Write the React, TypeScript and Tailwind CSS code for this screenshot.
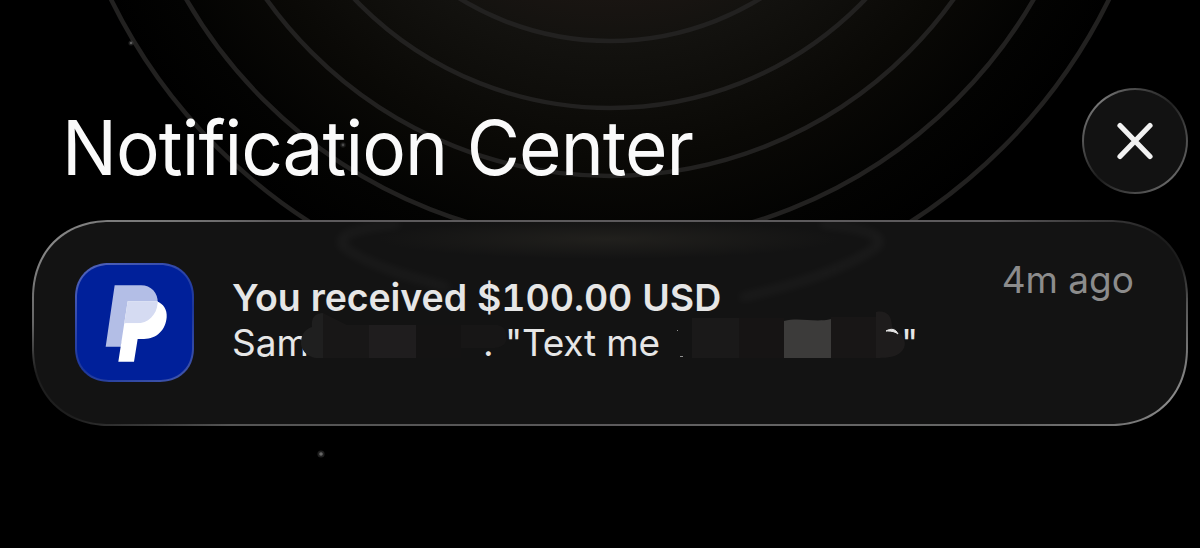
import type { ReactNode } from "react";

const RING_RADII = [287, 354, 422, 489.5, 556];

const STARS = [
  { x: 131, y: 43, r: 1.3, fill: "#5c5c5c" },
  { x: 343, y: 145, r: 1.4, fill: "#4a4a4a" },
  { x: 321, y: 454, r: 1.8, fill: "#666666" },
];

function Wallpaper() {
  return (
    <svg
      className="absolute inset-0 h-full w-full"
      viewBox="0 0 1200 548"
      fill="none"
      aria-hidden="true"
    >
      <defs>
        <radialGradient id="glow" gradientUnits="userSpaceOnUse" cx="610" cy="-246" r="560">
          <stop offset="0.4" stopColor="#1c1613" />
          <stop offset="0.52" stopColor="#13120f" />
          <stop offset="0.72" stopColor="#0a0906" />
          <stop offset="0.88" stopColor="#030302" />
          <stop offset="1" stopColor="#000000" />
        </radialGradient>
      </defs>
      <rect width="1200" height="548" fill="url(#glow)" />
      {RING_RADII.map((r) => (
        <circle key={r} cx="610" cy="-246" r={r} stroke="#222120" strokeWidth="4.5" />
      ))}
      {STARS.map((star) => (
        <g key={star.x}>
          <circle cx={star.x} cy={star.y} r={star.r * 2} fill={star.fill} opacity="0.3" />
          <circle cx={star.x} cy={star.y} r={star.r} fill={star.fill} />
        </g>
      ))}
    </svg>
  );
}

function CloseButton() {
  return (
    <button
      type="button"
      aria-label="Close"
      className="flex h-[106px] w-[106px] items-center justify-center rounded-full border-2 border-transparent [background:linear-gradient(#121212,#121212)_padding-box,conic-gradient(#4a4a4a,#222_45deg,#505050_90deg,#666_140deg,#4a4a4a_180deg,#1c1c1c_225deg,#555_270deg,#777_320deg,#4a4a4a)_border-box]"
    >
      <svg width="38" height="38" viewBox="0 0 38 38" fill="none">
        <path
          d="M4 3.5 34 34.5M34 3.5 4 34.5"
          stroke="#f2f2f2"
          strokeWidth="5.2"
          strokeLinecap="round"
        />
      </svg>
    </button>
  );
}

function PayPalIcon() {
  return (
    <div className="h-[119px] w-[119px] shrink-0 rounded-[34px] border-2 border-transparent [background:linear-gradient(#00209a,#00209a)_padding-box,linear-gradient(150deg,#5567bd,#2a42a6_40%,#1d3799_60%,#4458ad)_border-box] [corner-shape:superellipse(1.1)]">
      <svg className="h-full w-full" viewBox="51 44 345 345" fill="none">
        <defs>
          <clipPath id="backP">
            <path d="M164 105H243C273 105 295 128 293 158C290 195 264 219 230 219H197L183 289H137Z" />
          </clipPath>
        </defs>
        <path
          d="M164 105H243C273 105 295 128 293 158C290 195 264 219 230 219H197L183 289H137Z"
          fill="#b3bee6"
        />
        <path
          d="M203 153H290C310 160 322 178 320 201C317 239 290 266 252 266H233L222 334H175Z"
          fill="#ffffff"
        />
        <g clipPath="url(#backP)">
          <path d="M203 153H330V219H193Z" fill="#d5dbf2" />
        </g>
      </svg>
    </div>
  );
}

function CardSheen() {
  return (
    <svg
      className="absolute left-0 top-0 h-[202px] w-[1152px]"
      viewBox="34 222 1152 202"
      fill="none"
      aria-hidden="true"
    >
      <defs>
        <filter
          id="soft"
          x="-20%"
          y="-50%"
          width="140%"
          height="200%"
          colorInterpolationFilters="sRGB"
        >
          <feGaussianBlur stdDeviation="4" />
        </filter>
        <radialGradient id="sheen">
          <stop offset="0" stopColor="#21201d" />
          <stop offset="1" stopColor="#21201d" stopOpacity="0" />
        </radialGradient>
      </defs>
      <path
        d="M400 224C350 228 332 238 345 248C370 266 410 277 450 288"
        stroke="#ffffff"
        strokeOpacity="0.045"
        strokeWidth="7"
        filter="url(#soft)"
      />
      <path
        d="M820 224C870 228 890 238 875 248C840 272 790 286 740 298"
        stroke="#ffffff"
        strokeOpacity="0.045"
        strokeWidth="7"
        filter="url(#soft)"
      />
      <ellipse cx="608" cy="239" rx="230" ry="20" fill="url(#sheen)" />
    </svg>
  );
}

function Redactions() {
  return (
    <svg
      className="absolute left-0 top-0 h-[202px] w-[1152px]"
      viewBox="34 222 1152 202"
      aria-hidden="true"
    >
      <path d="M323 313V358H318C308 358 300 350 301 341C302 333 306 329 312 327C311 318 315 313 323 313Z" fill="#1f1f1f" />
      <path d="M323 313 347 325H369V358H323Z" fill="#181717" />
      <path d="M369 325H416V358H369Z" fill="#1f1d1e" />
      <path d="M416 325H461V358H416Z" fill="#141313" />
      <path d="M461 325H498C505 326 508 334 506 341C504 347 498 348 492 348H461Z" fill="#171616" />
      <path d="M692 318H739V358H692Z" fill="#1a1919" />
      <path d="M739 318H784V358H739Z" fill="#161414" />
      <path d="M784 321C800 317 815 323 831 319V358H784Z" fill="#3c3b3a" />
      <path d="M831 317H877V358H831Z" fill="#181616" />
      <path
        d="M876 312C886 310 892 315 892 327C902 332 907 341 904 348C900 355 894 358 876 358Z"
        fill="#1e1c1c"
      />
      <path d="M886 331C891 328 896 329 898 334C894 331 890 331 886 331Z" stroke="#e4e4e4" fill="#e4e4e4" />
      <path d="M677 330h1v1h-1zM680 356h3v1h-3z" fill="#909090" />
    </svg>
  );
}

function NotificationCard({
  icon,
  title,
  time,
  children,
}: {
  icon: ReactNode;
  title: string;
  time: string;
  children: ReactNode;
}) {
  return (
    <article className="relative ml-8 mt-[26px] h-[206px] w-[1156px] rounded-[78px] border-2 border-transparent [background:linear-gradient(#131313,#131313)_padding-box,conic-gradient(#5c5a5c,#5c5a5c_75deg,#1c1c1c_81deg,#1c1c1c_84deg,#555_88deg,#777_93deg,#8c8c8c_98deg,#777_101deg,#666_104deg,#5c5a5c_180deg,#555_255deg,#1e1e1e_260deg,#1e1e1e_265deg,#666_270deg,#888_278deg,#777_283deg,#5c5a5c_287deg)_border-box] [corner-shape:superellipse(1.12)]">
      <CardSheen />
      <div className="relative flex items-start pl-[41px] pr-[52px] pt-[41px]">
        {icon}
        <div className="ml-[38px] flex-1 whitespace-nowrap pt-[12px] text-[#e6e6e6]">
          <div className="text-[37.5px] font-semibold leading-[46px] tracking-[-0.07px] tabular-nums">
            {title}
          </div>
          {children}
        </div>
        <time className="whitespace-nowrap text-[37px] leading-[34px] text-[#8c8c8c]">{time}</time>
      </div>
      <Redactions />
    </article>
  );
}

export default function App() {
  return (
    <main className="relative h-[548px] w-[1200px] overflow-hidden bg-black font-['Inter',sans-serif]">
      <Wallpaper />
      <header className="relative flex items-start justify-between pl-[62px] pr-3 pt-[88px]">
        <h1 className="origin-left scale-x-[0.96] whitespace-nowrap pt-[13px] text-[76px] font-normal leading-[92px] tracking-[-1px] text-[#fafafa]">
          Notification Center
        </h1>
        <CloseButton />
      </header>
      <NotificationCard icon={<PayPalIcon />} title="You received $100.00 USD" time="4m ago">
        <div className="flex text-[37px] leading-[44px]">
          <span className="w-[251px]">Sam</span>
          <span className="w-[22px]">.</span>
          <span className="w-[396px] tracking-[-0.2px]">"Text me</span>
          <span>"</span>
        </div>
      </NotificationCard>
    </main>
  );
}
